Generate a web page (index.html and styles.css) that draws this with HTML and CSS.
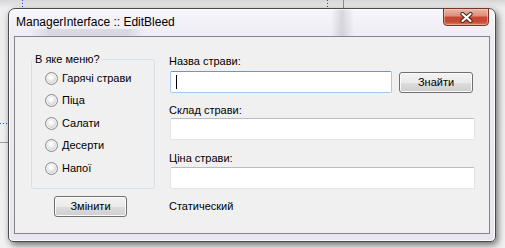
FILE: index.html
```html
<!DOCTYPE html>
<html lang="uk">
<head>
    <meta charset="UTF-8">
    <title>ManagerInterface :: EditBleed</title>
    <link rel="stylesheet" href="styles.css">
</head>
<body>
    <div class="window">
        <div class="titlebar">
            <span class="title">ManagerInterface :: EditBleed</span>
            <button class="close" type="button">
                <svg width="15" height="11" viewBox="0 0 15 11">
                    <path d="M3.5 2 L11.5 9 M11.5 2 L3.5 9" stroke="#4a2420" stroke-width="4.2" stroke-linecap="round"/>
                    <path d="M3.5 2 L11.5 9 M11.5 2 L3.5 9" stroke="#ffffff" stroke-width="2.2" stroke-linecap="round"/>
                </svg>
            </button>
        </div>

        <div class="client">
            <div class="left-col">
                <fieldset class="group">
                    <legend>В яке меню?</legend>
                    <div class="options">
                        <label class="option"><span class="radio"></span>Гарячі страви</label>
                        <label class="option"><span class="radio"></span>Піца</label>
                        <label class="option"><span class="radio"></span>Салати</label>
                        <label class="option"><span class="radio"></span>Десерти</label>
                        <label class="option"><span class="radio"></span>Напої</label>
                    </div>
                </fieldset>
                <button class="btn btn-change" type="button">Змінити</button>
            </div>

            <div class="right-col">
                <div class="field-label label-name">Назва страви:</div>
                <div class="search-row">
                    <div class="textbox textbox-short focused"><span class="caret"></span></div>
                    <button class="btn btn-find" type="button">Знайти</button>
                </div>

                <div class="field-label label-compose">Склад страви:</div>
                <div class="textbox"></div>

                <div class="field-label label-price">Ціна страви:</div>
                <div class="textbox"></div>

                <div class="field-label label-static">Статический</div>
            </div>
        </div>
    </div>
</body>
</html>
```

FILE: styles.css
```css
* {
    box-sizing: border-box;
}
body {
    margin: 0;
    width: 505px;
    height: 248px;
    overflow: hidden;
    font-family: 'Liberation Sans', Arial, sans-serif;
    font-size: 11px;
    color: #000;
    padding-top: 8px;
    background:
        repeating-linear-gradient(to bottom, #2d4bd6 0 1px, transparent 1px 3px) 22px 0 / 1px 8px no-repeat,
        repeating-linear-gradient(to bottom, #2d4bd6 0 1px, transparent 1px 3px) 327px 0 / 1px 8px no-repeat,
        linear-gradient(#8c8c8c, #8c8c8c) 343px 0 / 1px 8px no-repeat,
        repeating-linear-gradient(to right, #2d4bd6 0 1px, transparent 1px 3px) 0 123px / 8px 1px no-repeat,
        linear-gradient(#a0a0a0, #a0a0a0) 0 142px / 8px 1px no-repeat,
        linear-gradient(#d6d6d6, #eeeeee 8px, #f2f2f2);
}

/* janela */
.window {
    margin-left: 8px;
    width: 488px;
    height: 234px;
    border: 1px solid #4b4b4b;
    border-radius: 7px 7px 5px 5px;
    padding: 0 5px 7px;
    display: flex;
    flex-direction: column;
    background:
        linear-gradient(to right, transparent 20px, rgba(120, 120, 130, 0.18) 40px, rgba(120, 120, 130, 0.18) 120px, transparent 135px) 0 20px / 100% 7px no-repeat,
        linear-gradient(to right, transparent 322px, rgba(110, 110, 120, 0.22) 333px, transparent 345px) 0 0 / 100% 27px no-repeat,
        linear-gradient(#f7f6fb, #eeecf4 28px, #e9e6f0);
    box-shadow: inset 0 0 0 1px rgba(255, 255, 255, 0.7), 2px 3px 7px rgba(0, 0, 0, 0.55);
}
.titlebar {
    height: 27px;
    display: flex;
    justify-content: space-between;
    align-items: flex-start;
    padding-left: 2px;
    margin-right: 1px;
}
.title {
    margin-top: 6px;
    font-size: 12px;
    line-height: 15px;
}
.close {
    width: 46px;
    height: 18px;
    margin-top: -1px;
    padding: 0;
    border: 1px solid #7d3428;
    border-radius: 0 0 4px 4px;
    background: linear-gradient(#eab6a8, #de8f7b 42%, #c8482f 52%, #c54a33 78%, #e07a5f);
    box-shadow: inset 0 0 0 1px rgba(255, 220, 210, 0.45);
    display: flex;
    align-items: center;
    justify-content: center;
}

/* area cliente */
.client {
    flex: 1;
    display: flex;
    background: #f0f0f0;
    border: 1px solid #858585;
}
.left-col {
    margin: 16px 0 0 16px;
    width: 124px;
}
.group {
    margin: 0;
    padding: 0;
    border: 1px solid #d5dfe5;
    border-radius: 3px;
}
.group legend {
    margin-left: 2px;
    padding: 0 1px;
    line-height: 13px;
}
.options {
    padding: 1px 0 8px 13px;
}
.option {
    height: 22.5px;
    display: flex;
    align-items: center;
    gap: 4px;
    line-height: 13px;
}
.radio {
    width: 13px;
    height: 13px;
    border-radius: 50%;
    border: 1px solid #8c8d8e;
    background: radial-gradient(circle at 45% 40%, #ffffff 0 12%, #e4e4e4 45%, #c6c6c6 78%, #e2e2e2 100%);
    box-shadow: inset 0 0 0 1px #f2f2f2;
}
.btn {
    height: 21px;
    padding: 0;
    border: 1px solid #707070;
    border-radius: 3px;
    font: inherit;
    color: #000;
    background: linear-gradient(#f3f3f3, #ebebeb 50%, #dddddd 50%, #cfcfcf);
    box-shadow: inset 0 0 0 1px #fbfbfb;
}
.btn-change {
    width: 73px;
    margin: 7px 0 0 23px;
}
.btn-find {
    width: 74px;
}

.right-col {
    margin: 18px 0 0 15px;
    width: 305px;
}
.field-label {
    line-height: 13px;
    margin-left: -1px;
}
.label-name {
    margin-bottom: 3px;
}
.label-compose {
    margin: 11px 0 1px -1px;
}
.label-price {
    margin: 12px 0 2px -1px;
}
.label-static {
    margin-top: 11px;
}
.search-row {
    display: flex;
    align-items: center;
    gap: 7px;
}
.textbox {
    height: 22px;
    background: #fff;
    border: 1px solid #dfe4ea;
    border-top-color: #b9bcc2;
    border-radius: 2px;
}
.textbox-short {
    width: 222px;
    display: flex;
    align-items: center;
    padding-left: 5px;
}
.focused {
    border-color: #a5c8ec;
    border-top-color: #5d9ad6;
}
.caret {
    width: 1px;
    height: 14px;
    background: #000;
}
```
